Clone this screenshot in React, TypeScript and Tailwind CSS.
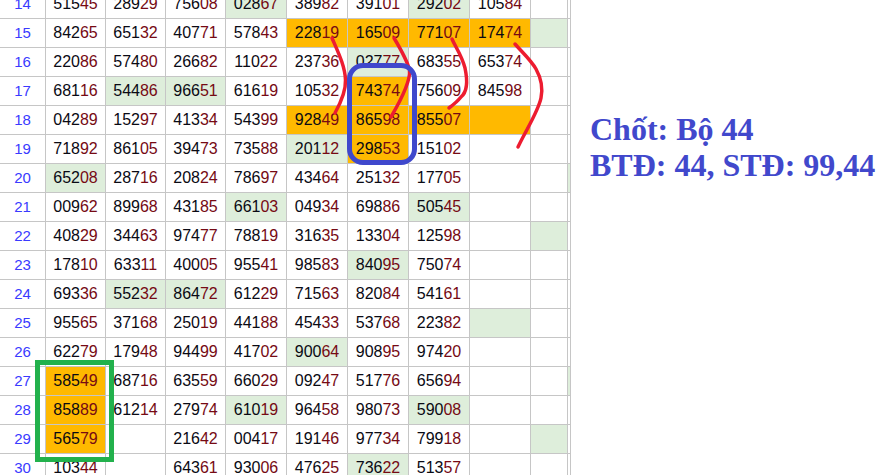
const rows: [number, string[]][] = [
  [14, ["51545", "28929", "75608", "02867g", "38982", "39101", "29202g", "10584", "", ""]],
  [15, ["84265", "65132", "40771", "57843", "22819o", "16509o", "77107o", "17474o", "g", ""]],
  [16, ["22086", "57480", "26682", "11022", "23736", "02777g", "68355", "65374", "", ""]],
  [17, ["68116", "54486g", "96651g", "61619", "10532", "74374o", "75609", "84598", "", ""]],
  [18, ["04289", "15297", "41334", "54399", "92849o", "86598o", "85507o", "o", "", ""]],
  [19, ["71892", "86105", "39473", "73588", "20112g", "29853o", "15102", "", "", ""]],
  [20, ["65208g", "28716", "20824", "78697", "43464", "25132", "17705", "", "", "g"]],
  [21, ["00962", "89968", "43185", "66103g", "04934", "69886", "50545g", "", "", ""]],
  [22, ["40829", "34463", "97477", "78819", "31635", "13304", "12598", "", "g", ""]],
  [23, ["17810", "63311", "40005", "95541", "98583", "84095g", "75074", "", "", ""]],
  [24, ["69336", "55232g", "86472g", "61229", "71563", "82084", "54161", "", "", ""]],
  [25, ["95565", "37168", "25019", "44188", "45433", "53768", "22382", "g", "", ""]],
  [26, ["62279", "17948", "94499", "41702", "90064g", "90895", "97420", "", "", ""]],
  [27, ["58549o", "68716", "63559", "66029", "09247", "51776", "65694", "", "", "g"]],
  [28, ["85889o", "61214", "27974", "61019g", "96458", "98073", "59008g", "", "", ""]],
  [29, ["56579o", "", "21642", "00417", "19146", "97734", "79918", "", "g", ""]],
  [30, ["10344", "", "64361", "93006", "47625", "73622g", "51357", "", "", ""]],
];

function Cell({ value }: { value: string }) {
  const last = value.slice(-1);
  const fill = last === "g" ? "bg-[#deeedb]" : last === "o" ? "bg-[#ffb900]" : "bg-white";
  const num = value.replace(/[go]$/, "");
  return (
    <div className={`flex items-center justify-center border-r border-b border-[#c6c6c6] text-[16px] text-[#0a0a14] ${fill}`}>
      {num.slice(0, 3)}
      <span className="text-[#760a14]">{num.slice(3)}</span>
    </div>
  );
}

export default function App() {
  return (
    <div className="relative flex h-[475px] w-[893px] overflow-hidden bg-white font-['Liberation_Sans',Arial,sans-serif]">
      <div className="-mt-[10px] grid w-[571px] shrink-0 auto-rows-[29px] grid-cols-[46px_60px_60px_60px_61px_61px_61px_61px_61px_37px_3px]">
        {rows.map(([n, cells]) => (
          <div key={n} className="contents">
            <div className="flex items-center justify-center border-r border-b border-[#c6c6c6] text-[15px] text-[#3a3aff]">{n}</div>
            {cells.map((c, i) => (
              <Cell key={i} value={c} />
            ))}
          </div>
        ))}
      </div>

      <div className="pl-[19px] pt-[111px] font-['Liberation_Serif','Times_New_Roman',serif] text-[32px] font-bold leading-[36px] whitespace-nowrap text-[#4148cc]">
        <div>Chốt: Bộ 44</div>
        <div>BTĐ: 44, STĐ: 99,44</div>
      </div>

      {/* hand drawn marks on top of the sheet */}
      <svg className="absolute left-0 top-0" width="893" height="475" fill="none" stroke="#ed1c30" strokeWidth="3.5" strokeLinecap="round">
        <path d="M332 38 C338 52 345 66 345.5 80 C346 92 340 104 335 113" />
        <path d="M394 38 C400 48 407 60 409.5 70 C411 82 398 105 391 117" />
        <path d="M452 39 C456 48 462 56 465 68 C468 82 467 92 461 97 C457 102 453 105 449 108" />
        <path d="M515 44 C522 52 531 60 536 69 C541 78 543 88 541 98 C538 112 526 130 518 147" />
      </svg>
      <div className="absolute left-[347px] top-[63px] h-[102px] w-[70px] rounded-[16px] border-[5px] border-[#3f48cc]" />
      <div className="absolute left-[35px] top-[360px] h-[102px] w-[79px] border-[5px] border-[#22b14c]" />
    </div>
  );
}
